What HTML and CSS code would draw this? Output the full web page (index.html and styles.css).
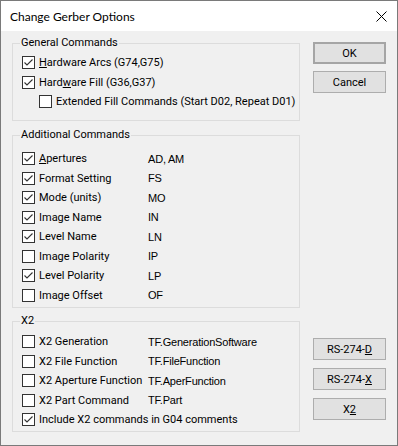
FILE: index.html
```html
<!DOCTYPE html>
<html lang="en">
<head>
    <meta charset="UTF-8">
    <title>Change Gerber Options</title>
    <link rel="stylesheet" href="styles.css">
</head>
<body>
    <div class="window">
        <div class="titlebar">
            <span class="title">Change Gerber Options</span>
            <svg class="close" width="11" height="11" viewBox="0 0 11 11">
                <path d="M0.5 0.5 L10.5 10.5 M10.5 0.5 L0.5 10.5" stroke="#000" stroke-width="1" fill="none"/>
            </svg>
        </div>

        <div class="body">
            <div class="groups">
                <fieldset class="group group-general">
                    <legend>General Commands</legend>
                    <div class="row">
                        <span class="check"><svg viewBox="0 0 11 11"><polyline points="1.5,5.5 4,8 9.5,2.5"/></svg></span>
                        <span class="label wide"><u>H</u>ardware Arcs (G74,G75)</span>
                    </div>
                    <div class="row">
                        <span class="check"><svg viewBox="0 0 11 11"><polyline points="1.5,5.5 4,8 9.5,2.5"/></svg></span>
                        <span class="label wide">Hard<u>w</u>are Fill (G36,G37)</span>
                    </div>
                    <div class="row sub">
                        <span class="check"></span>
                        <span class="label wide">Extended Fill Commands (Start D02, Repeat D01)</span>
                    </div>
                </fieldset>

                <fieldset class="group group-additional">
                    <legend>Additional Commands</legend>
                    <div class="row">
                        <span class="check"><svg viewBox="0 0 11 11"><polyline points="1.5,5.5 4,8 9.5,2.5"/></svg></span>
                        <span class="label"><u>A</u>pertures</span>
                        <span class="code">AD, AM</span>
                    </div>
                    <div class="row">
                        <span class="check"><svg viewBox="0 0 11 11"><polyline points="1.5,5.5 4,8 9.5,2.5"/></svg></span>
                        <span class="label">Format Setting</span>
                        <span class="code">FS</span>
                    </div>
                    <div class="row">
                        <span class="check"><svg viewBox="0 0 11 11"><polyline points="1.5,5.5 4,8 9.5,2.5"/></svg></span>
                        <span class="label">Mode (units)</span>
                        <span class="code">MO</span>
                    </div>
                    <div class="row">
                        <span class="check"><svg viewBox="0 0 11 11"><polyline points="1.5,5.5 4,8 9.5,2.5"/></svg></span>
                        <span class="label">Image Name</span>
                        <span class="code">IN</span>
                    </div>
                    <div class="row">
                        <span class="check"><svg viewBox="0 0 11 11"><polyline points="1.5,5.5 4,8 9.5,2.5"/></svg></span>
                        <span class="label">Level Name</span>
                        <span class="code">LN</span>
                    </div>
                    <div class="row">
                        <span class="check"></span>
                        <span class="label">Image Polarity</span>
                        <span class="code">IP</span>
                    </div>
                    <div class="row">
                        <span class="check"><svg viewBox="0 0 11 11"><polyline points="1.5,5.5 4,8 9.5,2.5"/></svg></span>
                        <span class="label">Level Polarity</span>
                        <span class="code">LP</span>
                    </div>
                    <div class="row">
                        <span class="check"></span>
                        <span class="label">Image Offset</span>
                        <span class="code">OF</span>
                    </div>
                </fieldset>

                <fieldset class="group group-x2">
                    <legend>X2</legend>
                    <div class="row">
                        <span class="check"></span>
                        <span class="label">X2 Generation</span>
                        <span class="code">TF.GenerationSoftware</span>
                    </div>
                    <div class="row">
                        <span class="check"></span>
                        <span class="label">X2 File Function</span>
                        <span class="code">TF.FileFunction</span>
                    </div>
                    <div class="row">
                        <span class="check"></span>
                        <span class="label">X2 Aperture Function</span>
                        <span class="code">TF.AperFunction</span>
                    </div>
                    <div class="row">
                        <span class="check"></span>
                        <span class="label">X2 Part Command</span>
                        <span class="code">TF.Part</span>
                    </div>
                    <div class="row">
                        <span class="check"><svg viewBox="0 0 11 11"><polyline points="1.5,5.5 4,8 9.5,2.5"/></svg></span>
                        <span class="label wide">Include X2 commands in G04 comments</span>
                    </div>
                </fieldset>
            </div>

            <div class="buttons">
                <div class="button-set">
                    <div class="btn btn-default">OK</div>
                    <div class="btn">Cancel</div>
                </div>
                <div class="button-set presets">
                    <div class="btn">RS-274-<u>D</u></div>
                    <div class="btn">RS-274-<u>X</u></div>
                    <div class="btn">X<u>2</u></div>
                </div>
            </div>
        </div>
    </div>
</body>
</html>
```

FILE: styles.css
```css
body {
    margin: 0;
    font-family: Roboto, 'Liberation Sans', sans-serif;
    font-size: 11px;
    color: #000;
}

.window {
    width: 398px;
    height: 446px;
    box-sizing: border-box;
    border: 1px solid #7a7a7a;
    background: #f0f0f0;
    display: flex;
    flex-direction: column;
}

.titlebar {
    height: 30px;
    flex: none;
    background: #fff;
    display: flex;
    align-items: center;
    justify-content: space-between;
    padding: 0 10px 0 9px;
}

.title {
    font-family: Lato, 'Liberation Sans', sans-serif;
    font-size: 12px;
}

.body {
    flex: 1;
    display: flex;
    padding-left: 11px;
}

.groups {
    width: 288px;
}

.group {
    margin: 0;
    padding: 0 0 0 7px;
    border: 1px solid #dcdcdc;
    min-width: 0;
}

.group legend {
    padding: 0 1px;
    line-height: 14px;
}

.group-general {
    margin-top: 5px;
    padding-top: 3px;
    padding-bottom: 8.5px;
}

.group-additional {
    margin-top: 7px;
    padding-top: 7px;
    padding-bottom: 2px;
}

.group-x2 {
    margin-top: 6px;
    padding-top: 4px;
    padding-bottom: 1.5px;
}

.row {
    display: flex;
    align-items: center;
    height: 19.5px;
    margin-left: 2px;
    white-space: nowrap;
}

.row.sub {
    margin-left: 19px;
}

.check {
    width: 13px;
    height: 13px;
    box-sizing: border-box;
    border: 1px solid #333;
    background: #fff;
    flex: none;
}

.check svg {
    display: block;
    width: 11px;
    height: 11px;
}

.check polyline {
    fill: none;
    stroke: #333;
    stroke-width: 1.1;
}

.label {
    margin-left: 4px;
    width: 109px;
    flex: none;
}

.label.wide {
    width: auto;
}

.code {
    font-family: 'Liberation Sans', sans-serif;
    font-size: 11px;
    letter-spacing: -0.2px;
}

.buttons {
    width: 73px;
    margin-left: 13px;
    padding: 11px 0 25px;
    display: flex;
    flex-direction: column;
    justify-content: space-between;
}

.button-set {
    display: flex;
    flex-direction: column;
    gap: 7px;
}

.button-set.presets {
    gap: 8px;
}

.btn {
    height: 22px;
    box-sizing: border-box;
    border: 1px solid #adadad;
    background: #e1e1e1;
    display: flex;
    align-items: center;
    justify-content: center;
}

.btn-default {
    border: 2px solid #a5a5a5;
}
```
